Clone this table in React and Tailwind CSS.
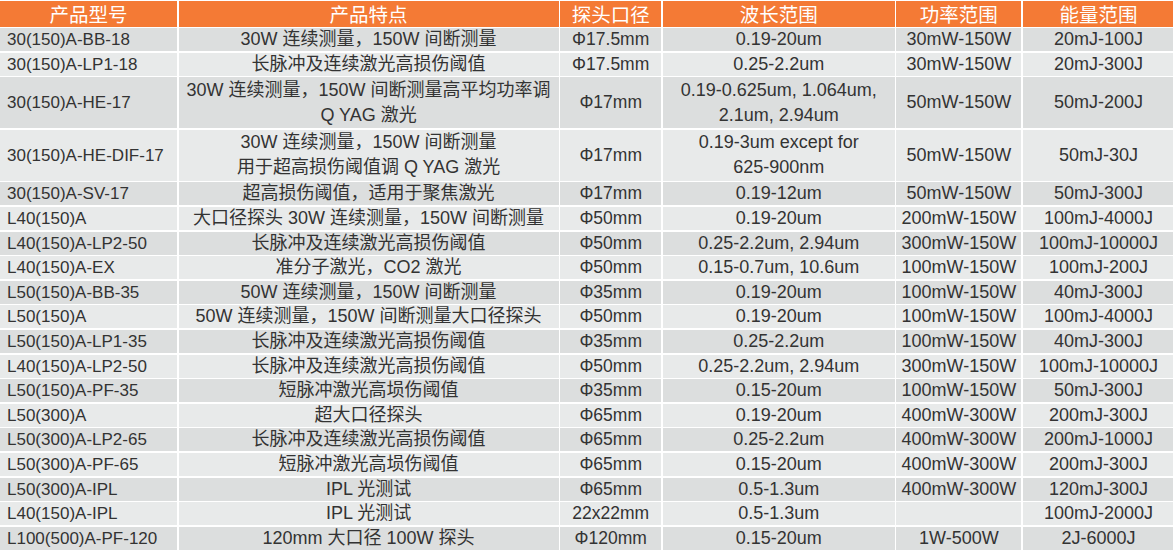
import React from 'react';

const headers = ['产品型号', '产品特点', '探头口径', '波长范围', '功率范围', '能量范围'];

const rows = [
  ['30(150)A-BB-18', '30W 连续测量，150W 间断测量', 'Φ17.5mm', '0.19-20um', '30mW-150W', '20mJ-100J'],
  ['30(150)A-LP1-18', '长脉冲及连续激光高损伤阈值', 'Φ17.5mm', '0.25-2.2um', '30mW-150W', '20mJ-300J'],
  ['30(150)A-HE-17', ['30W 连续测量，150W 间断测量高平均功率调', 'Q YAG 激光'], 'Φ17mm', ['0.19-0.625um, 1.064um,', '2.1um, 2.94um'], '50mW-150W', '50mJ-200J'],
  ['30(150)A-HE-DIF-17', ['30W 连续测量，150W 间断测量', '用于超高损伤阈值调 Q YAG 激光'], 'Φ17mm', ['0.19-3um except for', '625-900nm'], '50mW-150W', '50mJ-30J'],
  ['30(150)A-SV-17', '超高损伤阈值，适用于聚焦激光', 'Φ17mm', '0.19-12um', '50mW-150W', '50mJ-300J'],
  ['L40(150)A', '大口径探头 30W 连续测量，150W 间断测量', 'Φ50mm', '0.19-20um', '200mW-150W', '100mJ-4000J'],
  ['L40(150)A-LP2-50', '长脉冲及连续激光高损伤阈值', 'Φ50mm', '0.25-2.2um, 2.94um', '300mW-150W', '100mJ-10000J'],
  ['L40(150)A-EX', '准分子激光，CO2 激光', 'Φ50mm', '0.15-0.7um, 10.6um', '100mW-150W', '100mJ-200J'],
  ['L50(150)A-BB-35', '50W 连续测量，150W 间断测量', 'Φ35mm', '0.19-20um', '100mW-150W', '40mJ-300J'],
  ['L50(150)A', '50W 连续测量，150W 间断测量大口径探头', 'Φ50mm', '0.19-20um', '100mW-150W', '100mJ-4000J'],
  ['L50(150)A-LP1-35', '长脉冲及连续激光高损伤阈值', 'Φ35mm', '0.25-2.2um', '100mW-150W', '40mJ-300J'],
  ['L40(150)A-LP2-50', '长脉冲及连续激光高损伤阈值', 'Φ50mm', '0.25-2.2um, 2.94um', '300mW-150W', '100mJ-10000J'],
  ['L50(150)A-PF-35', '短脉冲激光高埙伤阈值', 'Φ35mm', '0.15-20um', '100mW-150W', '50mJ-300J'],
  ['L50(300)A', '超大口径探头', 'Φ65mm', '0.19-20um', '400mW-300W', '200mJ-300J'],
  ['L50(300)A-LP2-65', '长脉冲及连续激光高损伤阈值', 'Φ65mm', '0.25-2.2um', '400mW-300W', '200mJ-1000J'],
  ['L50(300)A-PF-65', '短脉冲激光高埙伤阈值', 'Φ65mm', '0.15-20um', '400mW-300W', '200mJ-300J'],
  ['L50(300)A-IPL', 'IPL 光测试', 'Φ65mm', '0.5-1.3um', '400mW-300W', '120mJ-300J'],
  ['L40(150)A-IPL', 'IPL 光测试', '22x22mm', '0.5-1.3um', '', '100mJ-2000J'],
  ['L100(500)A-PF-120', '120mm 大口径 100W 探头', 'Φ120mm', '0.15-20um', '1W-500W', '2J-6000J'],
];

// per-column text size
const sizes = ['text-[17px]', 'text-[18px]', 'text-[17.5px]', 'text-[18px]', 'text-[18px]', 'text-[18px]'];

const Cell = ({ value, col, bg, tall }) => (
  <div
    className={`${bg} ${sizes[col]} ${tall ? 'h-[51px]' : 'h-[23px]'} flex items-center ${
      col === 0 ? 'justify-start pl-[7px]' : 'justify-center text-center'
    } leading-[25px] whitespace-nowrap`}
  >
    {Array.isArray(value) ? (
      <div>
        {value.map((line) => (
          <div key={line}>{line}</div>
        ))}
      </div>
    ) : (
      value
    )}
  </div>
);

export default function App() {
  return (
    <div
      className="w-[1173px] h-[550px] bg-white overflow-hidden pt-[1px] text-[#333333]"
      style={{ fontFamily: '"Liberation Sans", "Noto Sans CJK SC", sans-serif' }}
    >
      <div className="grid grid-cols-[177px_380px_101px_232px_125px_151px] gap-[1.6px]">
        {headers.map((h) => (
          <div
            key={h}
            className="h-[25.5px] bg-[#f47a35] text-white text-[19.5px] flex items-center justify-center"
            style={{ fontFamily: '"Noto Sans CJK SC", sans-serif' }}
          >
            {h}
          </div>
        ))}
        {rows.map((row, i) => {
          const bg = i % 2 === 0 ? 'bg-[#dcdede]' : 'bg-[#e8eaea]';
          const tall = row.some((v) => Array.isArray(v));
          return row.map((v, j) => (
            <Cell key={`${i}-${j}`} value={v} col={j} bg={bg} tall={tall} />
          ));
        })}
      </div>
    </div>
  );
}
